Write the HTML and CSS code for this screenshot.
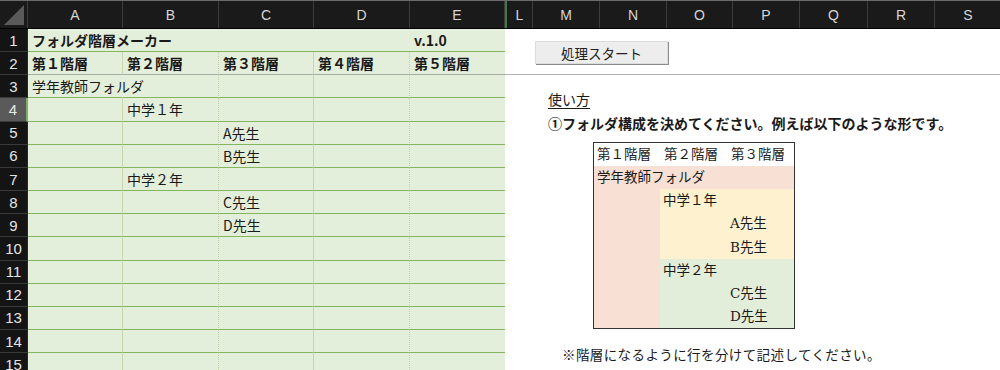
FILE: index.html
```html
<!DOCTYPE html>
<html lang="ja">
<head>
    <meta charset="UTF-8">
    <title>フォルダ階層メーカー</title>
    <link rel="stylesheet" href="styles.css">
</head>
<body>
    <div class="sheet">
        <!-- column letters -->
        <div class="col-heads">
            <div class="corner"><span class="corner-mark"></span></div>
            <div class="col-head w95">A</div>
            <div class="col-head w96">B</div>
            <div class="col-head w95">C</div>
            <div class="col-head w96">D</div>
            <div class="col-head w95">E</div>
            <div class="col-head w28 split">L</div>
            <div class="col-head w67">M</div>
            <div class="col-head w67">N</div>
            <div class="col-head w66">O</div>
            <div class="col-head w67">P</div>
            <div class="col-head w68">Q</div>
            <div class="col-head w67">R</div>
            <div class="col-head w67">S</div>
        </div>

        <div class="sheet-body">
            <!-- frozen columns A-E -->
            <div class="frozen">
                <div class="row row-title">
                    <div class="row-head">1</div>
                    <div class="cell bold">フォルダ階層メーカー</div>
                    <div class="cell"></div>
                    <div class="cell"></div>
                    <div class="cell"></div>
                    <div class="cell bold">v.1.0</div>
                </div>
                <div class="row row-labels">
                    <div class="row-head">2</div>
                    <div class="cell bold">第１階層</div>
                    <div class="cell bold">第２階層</div>
                    <div class="cell bold">第３階層</div>
                    <div class="cell bold">第４階層</div>
                    <div class="cell bold">第５階層</div>
                </div>
                <div class="row">
                    <div class="row-head">3</div>
                    <div class="cell spill">学年教師フォルダ</div>
                    <div class="cell"></div>
                    <div class="cell"></div>
                    <div class="cell"></div>
                    <div class="cell"></div>
                </div>
                <div class="row">
                    <div class="row-head selected">4</div>
                    <div class="cell"></div>
                    <div class="cell">中学１年</div>
                    <div class="cell"></div>
                    <div class="cell"></div>
                    <div class="cell"></div>
                </div>
                <div class="row">
                    <div class="row-head">5</div>
                    <div class="cell"></div>
                    <div class="cell"></div>
                    <div class="cell">A先生</div>
                    <div class="cell"></div>
                    <div class="cell"></div>
                </div>
                <div class="row">
                    <div class="row-head">6</div>
                    <div class="cell"></div>
                    <div class="cell"></div>
                    <div class="cell">B先生</div>
                    <div class="cell"></div>
                    <div class="cell"></div>
                </div>
                <div class="row">
                    <div class="row-head">7</div>
                    <div class="cell"></div>
                    <div class="cell">中学２年</div>
                    <div class="cell"></div>
                    <div class="cell"></div>
                    <div class="cell"></div>
                </div>
                <div class="row">
                    <div class="row-head">8</div>
                    <div class="cell"></div>
                    <div class="cell"></div>
                    <div class="cell">C先生</div>
                    <div class="cell"></div>
                    <div class="cell"></div>
                </div>
                <div class="row">
                    <div class="row-head">9</div>
                    <div class="cell"></div>
                    <div class="cell"></div>
                    <div class="cell">D先生</div>
                    <div class="cell"></div>
                    <div class="cell"></div>
                </div>
                <div class="row">
                    <div class="row-head">10</div>
                    <div class="cell"></div><div class="cell"></div><div class="cell"></div><div class="cell"></div><div class="cell"></div>
                </div>
                <div class="row">
                    <div class="row-head">11</div>
                    <div class="cell"></div><div class="cell"></div><div class="cell"></div><div class="cell"></div><div class="cell"></div>
                </div>
                <div class="row">
                    <div class="row-head">12</div>
                    <div class="cell"></div><div class="cell"></div><div class="cell"></div><div class="cell"></div><div class="cell"></div>
                </div>
                <div class="row">
                    <div class="row-head">13</div>
                    <div class="cell"></div><div class="cell"></div><div class="cell"></div><div class="cell"></div><div class="cell"></div>
                </div>
                <div class="row">
                    <div class="row-head">14</div>
                    <div class="cell"></div><div class="cell"></div><div class="cell"></div><div class="cell"></div><div class="cell"></div>
                </div>
                <div class="row">
                    <div class="row-head">15</div>
                    <div class="cell"></div><div class="cell"></div><div class="cell"></div><div class="cell"></div><div class="cell"></div>
                </div>
            </div>

            <!-- scrolling area with the button and instructions -->
            <div class="canvas">
                <div class="top-band">
                    <button type="button" class="run-btn">処理スタート</button>
                </div>
                <div class="guide">
                    <div class="guide-title">使い方</div>
                    <div class="guide-step">①フォルダ構成を決めてください。例えば以下のような形です。</div>

                    <div class="tree">
                        <div class="tree-head">
                            <span>第１階層</span>
                            <span>第２階層</span>
                            <span>第３階層</span>
                        </div>
                        <div class="tree-root">学年教師フォルダ</div>
                        <div class="tree-body">
                            <div class="tree-pad"></div>
                            <div class="tree-grades">
                                <div class="grade grade-1">
                                    <div class="line">中学１年</div>
                                    <div class="line teacher">A先生</div>
                                    <div class="line teacher">B先生</div>
                                </div>
                                <div class="grade grade-2">
                                    <div class="line">中学２年</div>
                                    <div class="line teacher">C先生</div>
                                    <div class="line teacher">D先生</div>
                                </div>
                            </div>
                        </div>
                    </div>

                    <div class="guide-note">※階層になるように行を分けて記述してください。</div>
                </div>
            </div>
        </div>
    </div>
</body>
</html>
```

FILE: styles.css
```css
body {
    margin: 0;
    background: #ffffff;
    font-family: "Noto Sans CJK JP", "Noto Sans", sans-serif;
    color: #1a1a1a;
    overflow: hidden;
}

.sheet {
    width: 1000px;
    height: 370px;
    overflow: hidden;
}

/* column letters */
.col-heads {
    display: flex;
    height: 29px;
    background: #1a1a1a;
    border-top: 1px solid #6a6a6a;
    border-bottom: 1px solid #000;
    box-sizing: border-box;
}
.corner {
    width: 28px;
    flex: none;
    position: relative;
    border-right: 1px solid #3c3c3c;
    box-sizing: border-box;
}
.corner-mark {
    position: absolute;
    right: 3px;
    bottom: 3px;
    width: 0;
    height: 0;
    border-left: 20px solid transparent;
    border-bottom: 20px solid #5a5a5a;
}
.col-head {
    flex: none;
    display: flex;
    align-items: center;
    justify-content: center;
    font-family: "Liberation Sans", Arial, sans-serif;
    font-size: 14px;
    color: #d6d6d6;
    border-right: 1px solid #3c3c3c;
    box-sizing: border-box;
}
.w28 { width: 28px; }
.w66 { width: 66px; }
.w67 { width: 67px; }
.w68 { width: 68px; }
.w95 { width: 95px; }
.w96 { width: 96px; }
.split {
    border-left: 2px solid #3f7a45;
    width: 28px;
}

.sheet-body {
    display: flex;
}

/* frozen grid */
.frozen {
    width: 505px;
    flex: none;
    background: #e4efdb;
}
.row {
    display: grid;
    grid-template-columns: 28px 95px 96px 95px 96px 95px;
    height: 23.16px;
}
.row-head {
    background: #141414;
    color: #e4e4e4;
    font-family: "Liberation Sans", Arial, sans-serif;
    font-size: 15px;
    display: flex;
    align-items: center;
    justify-content: center;
    border-bottom: 1px solid #3a3a3a;
    border-right: 1px solid #2a2a2a;
}
.row-head.selected {
    background: #5a5a5a;
    color: #e8e8e8;
    border-right: 2px solid #7fae66;
}
.cell {
    font-size: 14px;
    line-height: 22px;
    padding-left: 4px;
    white-space: nowrap;
    overflow: visible;
    border-bottom: 1px solid #84b660;
    min-width: 0;
}
.cell:nth-child(2),
.cell:nth-child(4) {
    border-right: 1px solid #c4d9b1;
}
.cell:nth-child(3),
.cell:nth-child(5) {
    border-right: 1px dotted #bcd2a8;
}
.cell.spill {
    border-right-color: transparent;
}
.bold {
    font-weight: bold;
}
.row-title .cell {
    border-right: none;
}
.row-labels .cell {
    border-bottom-color: #a6aca2;
}

/* right side */
.canvas {
    flex: 1;
    background: #ffffff;
}
.top-band {
    height: 46.3px;
    box-sizing: border-box;
    padding: 12px 0 0 30px;
    border-bottom: 1px solid #b4b4b4;
}
.run-btn {
    display: block;
    width: 133px;
    height: 23px;
    padding: 0;
    background: #ededed;
    border: 1px solid #dcdcdc;
    box-shadow: 1px 1px 0 #8a8a8a;
    font-family: "Noto Sans CJK JP", sans-serif;
    font-size: 13.5px;
    line-height: 20px;
    color: #222;
}

.guide {
    padding: 12px 0 0 43px;
    font-size: 14px;
}
.guide-title {
    line-height: 24px;
    text-decoration: underline;
    text-underline-offset: 3px;
}
.guide-step {
    line-height: 24px;
    font-weight: bold;
}

.tree {
    margin: 7px 0 0 45px;
    width: 202px;
    border: 1px solid #333;
    box-sizing: border-box;
    font-family: "DejaVu Serif", "Noto Sans CJK JP", serif;
    font-size: 13.5px;
}
.tree-head {
    display: grid;
    grid-template-columns: 67px 67px 66px;
    height: 23px;
    line-height: 23px;
    background: #fff;
}
.tree-head span {
    padding-left: 3px;
}
.tree-root {
    height: 23px;
    line-height: 23px;
    padding-left: 3px;
    background: #f8e0d4;
}
.tree-body {
    display: flex;
}
.tree-pad {
    width: 66px;
    background: #f8e0d4;
}
.tree-grades {
    flex: 1;
}
.grade .line {
    height: 23.2px;
    line-height: 23px;
    padding-left: 3px;
}
.grade .teacher {
    padding-left: 70px;
}
.grade-1 {
    background: #fdf1d0;
}
.grade-2 {
    background: #e2edda;
}

.guide-note {
    margin: 15px 0 0 14px;
    line-height: 20px;
    font-size: 13.5px;
    letter-spacing: 0.4px;
}
```
